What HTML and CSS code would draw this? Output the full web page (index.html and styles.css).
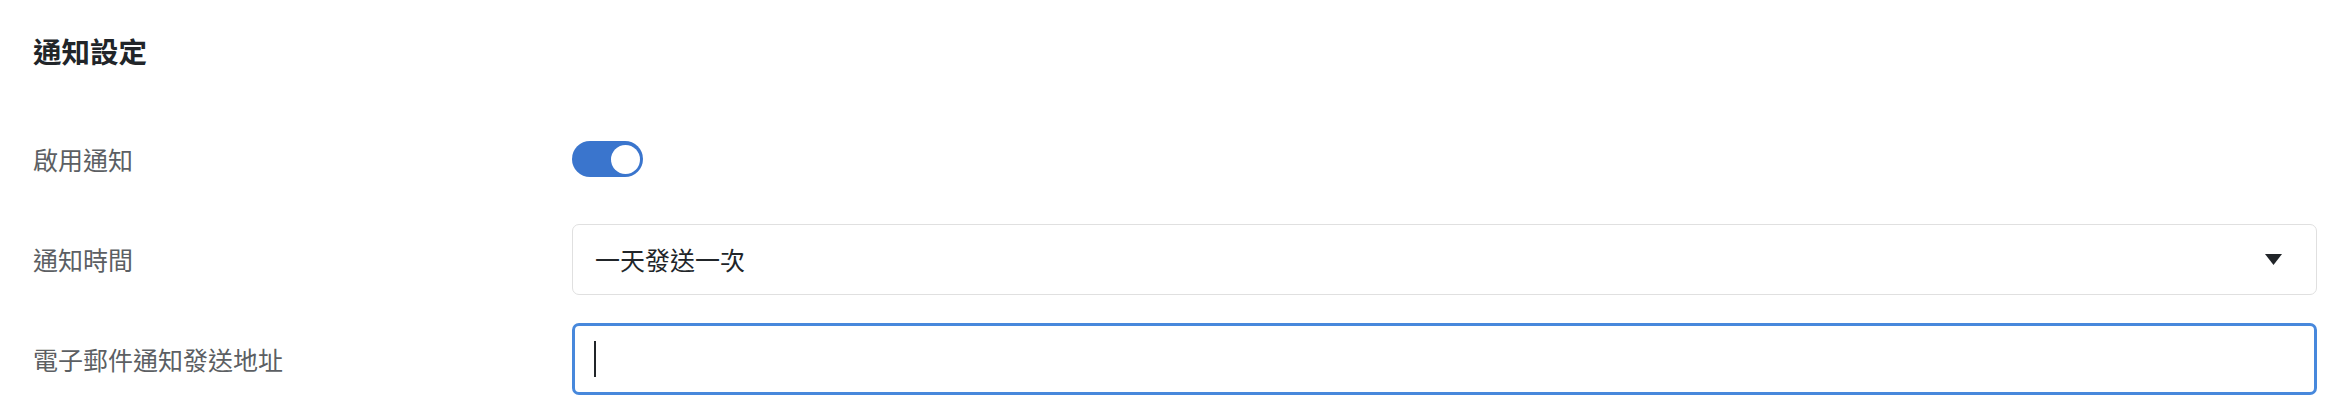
FILE: index.html
```html
<!DOCTYPE html>
<html lang="zh-Hant">
<head>
<meta charset="utf-8">
<title>通知設定</title>
<link rel="stylesheet" href="styles.css">
</head>
<body>
<div class="page">
  <h2 class="title">通知設定</h2>
  <div class="form">
    <div class="row">
      <div class="label">啟用通知</div>
      <div class="control">
        <div class="toggle"><span class="knob"></span></div>
      </div>
    </div>
    <div class="row">
      <div class="label">通知時間</div>
      <div class="control">
        <div class="select">
          <span class="select-text">一天發送一次</span>
          <svg class="arrow" width="17" height="11" viewBox="0 0 17 11"><polygon points="0,0 17,0 8.5,11" fill="#212529"/></svg>
        </div>
      </div>
    </div>
    <div class="row">
      <div class="label">電子郵件通知發送地址</div>
      <div class="control">
        <div class="input"><span class="caret"></span></div>
      </div>
    </div>
  </div>
</div>
</body>
</html>
```

FILE: styles.css
```css
html, body {
  margin: 0;
  padding: 0;
  background: #ffffff;
  overflow: hidden;
}
body {
  font-family: "Noto Sans CJK TC", "Noto Sans", sans-serif;
  color: #212529;
}
.page {
  padding: 0 15px 0 33px;
}
.title {
  margin: 0;
  padding-top: 31px;
  font-size: 28.5px;
  line-height: 40px;
  font-weight: 700;
  color: #212529;
}
.form {
  margin-top: 38px;
}
.row {
  height: 100px;
  display: grid;
  grid-template-columns: 539px 1fr;
  align-items: center;
}
.label {
  font-size: 25px;
  line-height: 36px;
  color: #5c5f63;
}
.control {
  display: flex;
  align-items: center;
}
.toggle {
  width: 71px;
  height: 36px;
  border-radius: 18px;
  background: #3a75cd;
  display: flex;
  align-items: center;
  justify-content: flex-end;
  padding: 0 3px;
  box-sizing: border-box;
}
.knob {
  width: 29px;
  height: 29px;
  border-radius: 50%;
  background: #ffffff;
}
.select {
  flex: 1;
  height: 71px;
  box-sizing: border-box;
  border: 1.5px solid #e0e0e0;
  border-radius: 7px;
  display: flex;
  align-items: center;
  padding: 0 34px 0 22px;
}
.select-text {
  flex: 1;
  font-size: 25px;
  line-height: 36px;
  color: #212529;
}
.arrow {
  display: block;
}
.input {
  flex: 1;
  height: 72px;
  box-sizing: border-box;
  border: 3px solid #4788dc;
  border-radius: 7px;
  display: flex;
  align-items: center;
  padding-left: 19px;
}
.caret {
  width: 2px;
  height: 36px;
  background: #212529;
}
```
